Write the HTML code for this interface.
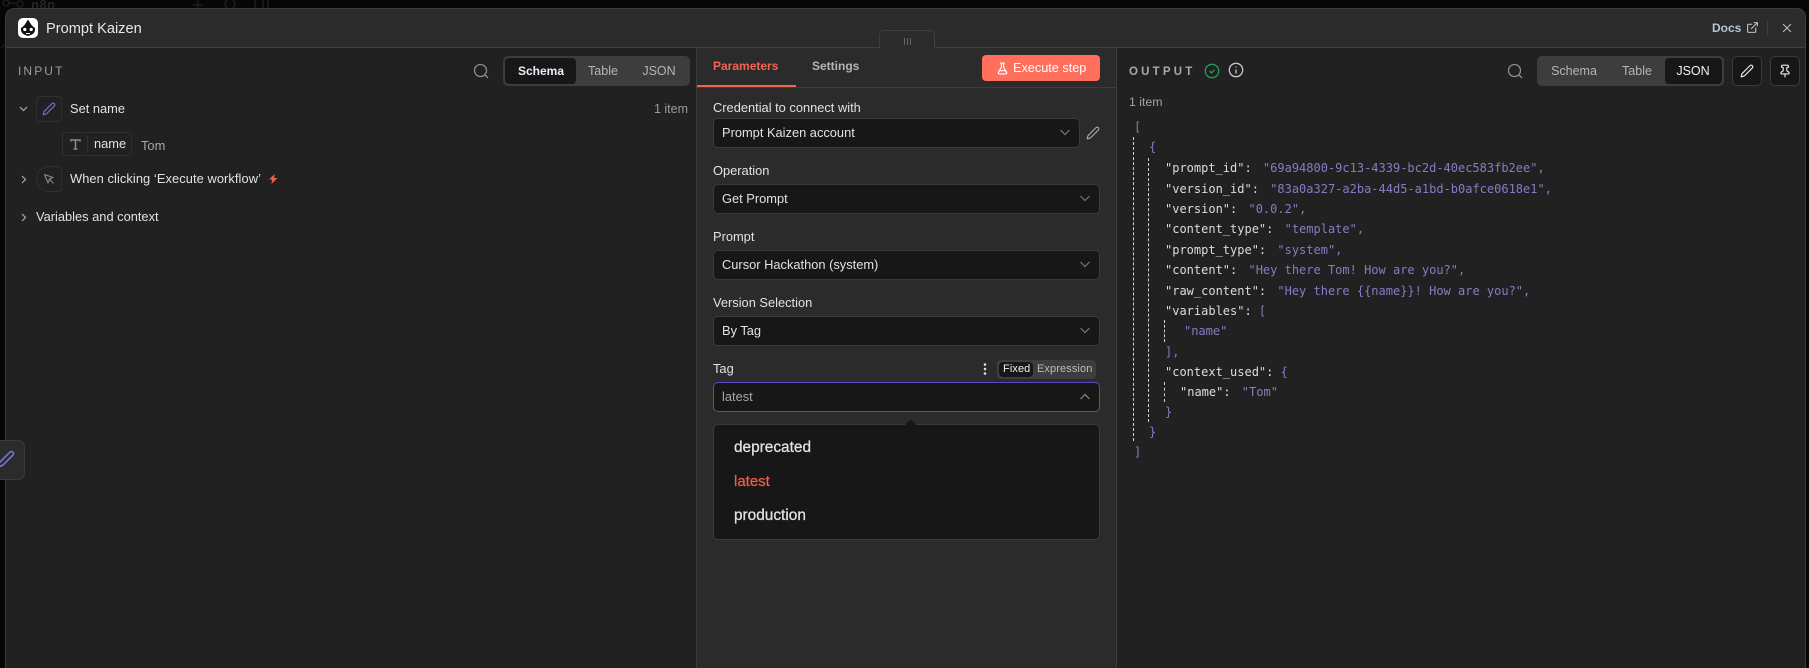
<!DOCTYPE html>
<html><head><meta charset="utf-8"><style>
html,body{margin:0;padding:0;background:#060606;width:1809px;height:668px;overflow:hidden;font-family:"Liberation Sans",sans-serif}
*{box-sizing:border-box}
#root{position:relative;width:1809px;height:668px;overflow:hidden;background:#060606}
.a{position:absolute}
.t{position:absolute;white-space:nowrap;line-height:16px;font-size:12.85px;color:#e2e2e2}
.sel{position:absolute;left:713px;width:387px;height:30px;background:#171717;border:1px solid #3a3a3a;border-radius:5px}
svg{position:absolute;overflow:visible;fill:none}
.j{position:absolute;white-space:pre;font:12px/16px "DejaVu Sans Mono",monospace;color:#dcdcdc}
.j i{font-style:normal;color:#837dc4}
.j b{font-weight:normal;color:#837dc4;margin-left:4px}
.d{position:absolute;width:0;border-left:1px dashed #d0d0de}
.m{-webkit-text-stroke:.25px currentColor}
</style></head><body><div id="root">
<div class="t" style="left:31px;top:-3px;font-size:13px;color:#242424;font-weight:bold;letter-spacing:.5px">n8n</div>
<svg style="left:0;top:0" width="1809" height="60" stroke="#1d1d1d" stroke-width="1.5"><circle cx="6" cy="3" r="3"/><circle cx="20" cy="4" r="3"/><path d="M9 3h8M198 0v9M193 5h10"/><circle cx="230" cy="4" r="5"/><path d="M255 0v8M263 0v8M268 0v8M2 48a3 3 0 1 1 3 3"/></svg>

<div class="a" style="left:5px;top:8px;width:1801px;height:670px;background:#2b2b2b;border:1px solid #3a3a3a;border-radius:9px 9px 0 0;overflow:hidden">
 <div class="a" style="left:0;top:38px;width:1800px;height:1px;background:#3f3f3f"></div>
 <div class="a" style="left:0;top:39px;width:690px;height:640px;background:#212121"></div>
 <div class="a" style="left:690px;top:39px;width:1px;height:640px;background:#3c3c3c"></div>
 <div class="a" style="left:1110px;top:39px;width:1px;height:640px;background:#3c3c3c"></div>
 <div class="a" style="left:1111px;top:39px;width:690px;height:640px;background:#212121"></div>
</div>

<!-- header -->
<div class="a" style="left:18px;top:18px;width:20px;height:20px;background:#fff;border-radius:5px"></div>
<svg style="left:18px;top:18px" width="20" height="20" viewBox="0 0 20 20"><path d="M10 1.500 13.500 7 16 9.500 4 9.500 6.500 7z" fill="#111"/><path d="M3 10c2-2 12-2 14 0 .5 3-1 5-3 6.500l-4 1.500-4-1.500C4 15 2.500 13 3 10z" fill="#111"/><circle cx="6.800" cy="11.500" r="1.600" fill="#fff"/><circle cx="13.200" cy="11.500" r="1.600" fill="#fff"/><path d="M8 15.500h4" stroke="#fff" stroke-width="1"/></svg>
<div class="t" style="left:46px;top:21px;font-size:14.600px;color:#e8e8e8">Prompt Kaizen</div>
<div class="t" style="left:1712px;top:20px;color:#b9c6d4;font-weight:bold;font-size:12px">Docs</div>
<svg style="left:1746px;top:21px" width="13" height="13" viewBox="0 0 24 24" stroke="#b9c6d4" stroke-width="2" stroke-linecap="round" stroke-linejoin="round"><path d="M15 3h6v6M10 14 21 3M18 13v6a2 2 0 0 1-2 2H5a2 2 0 0 1-2-2V8a2 2 0 0 1 2-2h6"/></svg>
<div class="a" style="left:1767px;top:20px;width:1px;height:16px;background:#3f3f3f"></div>
<svg style="left:1783px;top:24px" width="8" height="8" viewBox="0 0 8 8" stroke="#bbb" stroke-width="1.100"><path d="M0 0 8 8M8 0 0 8"/></svg>

<!-- drag handle -->
<div class="a" style="left:879px;top:30px;width:56px;height:18px;background:#2b2b2b;border:1px solid #3f3f3f;border-bottom:none;border-radius:5px 5px 0 0"></div>
<div class="a" style="left:904px;top:38px;width:7px;height:7px;background:repeating-linear-gradient(90deg,#666 0 1px,transparent 1px 3px)"></div>

<!-- INPUT -->
<div class="t" style="left:18px;top:63px;font-size:12px;letter-spacing:2.100px;color:#9c9c9c">INPUT</div>
<svg style="left:473px;top:63px" width="16" height="16" viewBox="0 0 16 16" stroke="#8c8c8c" stroke-width="1.300"><circle cx="7.500" cy="7.500" r="6"/><path d="m12 12 3 3"/></svg>
<div class="a" style="left:503px;top:56px;width:187px;height:30px;background:#3d3d3d;border-radius:5px"></div>
<div class="a" style="left:505px;top:58px;width:71px;height:26px;background:#171717;border-radius:4px"></div>
<div class="t" style="left:518px;top:63px;width:46px;text-align:center;font-weight:bold;font-size:12px;color:#e6edf5">Schema</div>
<div class="t" style="left:588px;top:63px;width:30px;text-align:center;color:#b5b5b5;font-size:12.500px">Table</div>
<div class="t" style="left:640px;top:63px;width:38px;text-align:center;color:#b5b5b5;font-size:12.500px">JSON</div>

<svg style="left:19px;top:106px" width="9" height="6" viewBox="0 0 9 6" stroke="#aaa" stroke-width="1.200"><path d="m1 1 3.500 3.500L8 1"/></svg>
<div class="a" style="left:36px;top:96px;width:26px;height:26px;border:1px solid #303030;border-radius:4px"></div>
<svg style="left:42px;top:102px" width="14" height="14" viewBox="0 0 24 24" stroke="#6f6fd8" stroke-width="2" stroke-linejoin="round"><path d="M21.174 6.812a1 1 0 0 0-3.986-3.987L3.842 16.174a2 2 0 0 0-.5.830l-1.321 4.352a.5.500 0 0 0 .623.622l4.353-1.320a2 2 0 0 0 .830-.497z"/></svg>
<div class="t" style="left:70px;top:101px">Set name</div>
<div class="t" style="left:640px;top:101px;width:48px;text-align:right;color:#9a9a9a;font-size:12.500px">1 item</div>

<div class="a" style="left:62px;top:132px;width:70px;height:24px;border:1px solid #303030;border-radius:4px"></div>
<div class="a" style="left:87px;top:135px;width:1px;height:18px;background:#303030"></div>
<svg style="left:70px;top:139px" width="11" height="11" viewBox="0 0 11 11" stroke="#8d8d8d" stroke-width="1.500"><path d="M1 2.500V1h9v1.500M5.500 1v9M3.500 10h4"/></svg>
<div class="t" style="left:94px;top:136px">name</div>
<div class="t" style="left:141px;top:138px;color:#a8a8a8">Tom</div>

<svg style="left:21px;top:175px" width="6" height="9" viewBox="0 0 6 9" stroke="#aaa" stroke-width="1.200"><path d="m1 1 3.500 3.500L1 8"/></svg>
<div class="a" style="left:36px;top:166px;width:26px;height:26px;border:1px solid #303030;border-radius:13px 4px 4px 13px"></div>
<svg style="left:44px;top:174px" width="10" height="10" viewBox="0 0 10 10" stroke="#888" stroke-width="1.100" stroke-linejoin="round"><path d="M.5.500 9 3.500 5.500 5 4 9zM5.500 5 9.500 9.500"/></svg>
<div class="t" style="left:70px;top:171px;letter-spacing:.08px">When clicking ‘Execute workflow’</div>
<svg style="left:269px;top:174px" width="9" height="10" viewBox="0 0 9 10"><path d="M5.500 0 0 5.500h3L2.500 10 8.500 4h-3.300z" fill="#e8604f"/></svg>

<svg style="left:21px;top:213px" width="6" height="9" viewBox="0 0 6 9" stroke="#aaa" stroke-width="1.200"><path d="m1 1 3.500 3.500L1 8"/></svg>
<div class="t" style="left:36px;top:209px">Variables and context</div>

<!-- left floating pencil -->
<div class="a" style="left:-10px;top:440px;width:35px;height:40px;background:#2b2b2b;border:1px solid #3a3a3a;border-radius:7px"></div>
<svg style="left:-3px;top:450px" width="18" height="18" viewBox="0 0 24 24" stroke="#7b7be8" stroke-width="2" stroke-linejoin="round"><path d="M21.174 6.812a1 1 0 0 0-3.986-3.987L3.842 16.174a2 2 0 0 0-.5.830l-1.321 4.352a.5.500 0 0 0 .623.622l4.353-1.320a2 2 0 0 0 .830-.497z"/></svg>

<!-- Middle -->
<div class="a" style="left:697px;top:87px;width:419px;height:1px;background:#3d3d3d"></div>
<div class="a" style="left:697px;top:85px;width:99px;height:2px;background:#f2644f"></div>
<div class="t" style="left:713px;top:58px;font-weight:bold;font-size:12px;color:#f2644f">Parameters</div>
<div class="t" style="left:812px;top:58px;font-weight:bold;font-size:12px;color:#b5b5b5">Settings</div>
<div class="a" style="left:982px;top:55px;width:118px;height:26px;background:#ff6f5c;border-radius:4px"></div>
<svg style="left:996px;top:62px" width="13" height="13" viewBox="0 0 24 24" stroke="#fff" stroke-width="2.200" stroke-linecap="round" stroke-linejoin="round"><path d="M10 2v7.500L4.500 19a2 2 0 0 0 1.800 3h11.400a2 2 0 0 0 1.800-3L14 9.500V2M8.500 2h7M7.500 16h9"/></svg>
<div class="t" style="left:1013px;top:60px;font-size:12.700px;color:#fff">Execute step</div>

<div class="t" style="left:713px;top:100px">Credential to connect with</div>
<div class="sel" style="width:367px;top:118px"></div>
<div class="t" style="left:722px;top:125px">Prompt Kaizen account</div>
<svg style="left:1060px;top:129px" width="10" height="7" viewBox="0 0 10 7" stroke="#777" stroke-width="1.200"><path d="m.5 1 4.500 4.500L9.500 1"/></svg>
<svg style="left:1086px;top:126px" width="14" height="14" viewBox="0 0 24 24" stroke="#aaa" stroke-width="1.900" stroke-linejoin="round"><path d="M21.174 6.812a1 1 0 0 0-3.986-3.987L3.842 16.174a2 2 0 0 0-.5.830l-1.321 4.352a.5.500 0 0 0 .623.622l4.353-1.320a2 2 0 0 0 .830-.497z"/></svg>

<div class="t" style="left:713px;top:163px">Operation</div>
<div class="sel" style="top:184px"></div>
<div class="t" style="left:722px;top:191px">Get Prompt</div>
<svg style="left:1080px;top:195px" width="10" height="7" viewBox="0 0 10 7" stroke="#777" stroke-width="1.200"><path d="m.5 1 4.500 4.500L9.500 1"/></svg>

<div class="t" style="left:713px;top:229px">Prompt</div>
<div class="sel" style="top:250px"></div>
<div class="t" style="left:722px;top:257px">Cursor Hackathon (system)</div>
<svg style="left:1080px;top:261px" width="10" height="7" viewBox="0 0 10 7" stroke="#777" stroke-width="1.200"><path d="m.5 1 4.500 4.500L9.500 1"/></svg>

<div class="t" style="left:713px;top:295px">Version Selection</div>
<div class="sel" style="top:316px"></div>
<div class="t" style="left:722px;top:323px">By Tag</div>
<svg style="left:1080px;top:327px" width="10" height="7" viewBox="0 0 10 7" stroke="#777" stroke-width="1.200"><path d="m.5 1 4.500 4.500L9.500 1"/></svg>

<div class="t" style="left:713px;top:361px">Tag</div>
<svg style="left:983px;top:362px" width="4" height="14" viewBox="0 0 4 14"><circle cx="2" cy="2.500" r="1.300" fill="#e0e0e0"/><circle cx="2" cy="7" r="1.300" fill="#e0e0e0"/><circle cx="2" cy="11.500" r="1.300" fill="#e0e0e0"/></svg>
<div class="a" style="left:997px;top:360px;width:99px;height:19px;background:#3d3d3d;border-radius:4px"></div>
<div class="a" style="left:999px;top:362px;width:34px;height:15px;background:#171717;border-radius:4px"></div>
<div class="t" style="left:1003px;top:361px;font-size:11px;color:#f0f0f0;width:26px;text-align:center;letter-spacing:.1px;line-height:17px">Fixed</div>
<div class="t" style="left:1037px;top:361px;font-size:11px;color:#bdbdbd;line-height:17px;letter-spacing:.1px">Expression</div>
<div class="sel" style="top:382px;border-color:#5a48c0"></div>
<div class="t" style="left:722px;top:389px;color:#a5a5a5">latest</div>
<svg style="left:1080px;top:393px" width="10" height="7" viewBox="0 0 10 7" stroke="#888" stroke-width="1.200"><path d="m.5 6 4.500-4.500L9.500 6"/></svg>

<div class="a" style="left:713px;top:424px;width:387px;height:116px;background:#171717;border:1px solid #3a3a3a;border-radius:5px"></div>
<svg style="left:904px;top:419px" width="13" height="7" viewBox="0 0 13 7"><path d="M0 7 6.500 0 13 7z" fill="#171717"/></svg>
<div class="t m" style="left:734px;top:440px;font-size:15.400px;color:#e4e4e4">deprecated</div>
<div class="t m" style="left:734px;top:474px;font-size:15px;color:#ec5f4c">latest</div>
<div class="t m" style="left:734px;top:508px;font-size:15.400px;color:#e4e4e4">production</div>

<!-- OUTPUT -->
<div class="t" style="left:1129px;top:63.500px;font-size:11.500px;font-weight:bold;letter-spacing:3.200px;color:#a8a8a8">OUTPUT</div>
<svg style="left:1204px;top:63px" width="16" height="16" viewBox="0 0 16 16" stroke="#1f9d5c" stroke-width="1.300"><circle cx="8" cy="8" r="6.700"/><path d="m5.500 8 2 2 3-3.500"/></svg>
<svg style="left:1228px;top:62px" width="16" height="16" viewBox="0 0 16 16" stroke="#c8c8c8" stroke-width="1.300"><circle cx="8" cy="8" r="6.700"/><path d="M8 7.500v4M8 4.500v1"/></svg>
<div class="t" style="left:1129px;top:94px;font-size:12.300px;color:#a3a3a3">1 item</div>

<svg style="left:1507px;top:63px" width="16" height="16" viewBox="0 0 16 16" stroke="#8c8c8c" stroke-width="1.300"><circle cx="7.500" cy="7.500" r="6"/><path d="m12 12 3 3"/></svg>
<div class="a" style="left:1537px;top:56px;width:187px;height:30px;background:#3d3d3d;border-radius:5px"></div>
<div class="a" style="left:1665px;top:58px;width:57px;height:26px;background:#171717;border-radius:4px"></div>
<div class="t" style="left:1551px;top:63px;width:46px;text-align:center;font-size:12.500px;color:#b5b5b5">Schema</div>
<div class="t" style="left:1622px;top:63px;width:30px;text-align:center;font-size:12.500px;color:#b5b5b5">Table</div>
<div class="t" style="left:1674px;top:63px;width:38px;text-align:center;font-size:12.500px;color:#f0f0f0">JSON</div>
<div class="a" style="left:1732px;top:56px;width:30px;height:30px;background:#171717;border:1px solid #3a3a3a;border-radius:5px"></div>
<svg style="left:1740px;top:64px" width="14" height="14" viewBox="0 0 24 24" stroke="#e8e8e8" stroke-width="2" stroke-linejoin="round"><path d="M21.174 6.812a1 1 0 0 0-3.986-3.987L3.842 16.174a2 2 0 0 0-.5.830l-1.321 4.352a.5.500 0 0 0 .623.622l4.353-1.320a2 2 0 0 0 .830-.497z"/></svg>
<div class="a" style="left:1770px;top:56px;width:30px;height:30px;background:#171717;border:1px solid #3a3a3a;border-radius:5px"></div>
<svg style="left:1778px;top:64px" width="14" height="14" viewBox="0 0 24 24" stroke="#e8e8e8" stroke-width="2" stroke-linecap="round" stroke-linejoin="round"><path d="M12 17v5M9 10.760a2 2 0 0 1-1.110 1.790l-1.780.900A2 2 0 0 0 5 15.240V16a1 1 0 0 0 1 1h12a1 1 0 0 0 1-1v-.760a2 2 0 0 0-1.110-1.790l-1.780-.900A2 2 0 0 1 15 10.760V7a1 1 0 0 1 1-1 2 2 0 0 0 0-4H8a2 2 0 0 0 0 4 1 1 0 0 1 1 1z"/></svg>

<!-- JSON -->
<div class="d" style="left:1133px;top:137px;height:304px"></div>
<div class="d" style="left:1148px;top:158px;height:264px"></div>
<div class="d" style="left:1164px;top:320px;height:22px"></div>
<div class="d" style="left:1164px;top:382px;height:20px"></div>
<div class="j" style="left:1134px;top:119px"><i>[</i></div>
<div class="j" style="left:1149px;top:139px"><i>{</i></div>
<div class="j" style="left:1165px;top:160px">"prompt_id": <b>"69a94800-9c13-4339-bc2d-40ec583fb2ee"</b><i>,</i></div>
<div class="j" style="left:1165px;top:181px">"version_id": <b>"83a0a327-a2ba-44d5-a1bd-b0afce0618e1"</b><i>,</i></div>
<div class="j" style="left:1165px;top:201px">"version": <b>"0.0.2"</b><i>,</i></div>
<div class="j" style="left:1165px;top:221px">"content_type": <b>"template"</b><i>,</i></div>
<div class="j" style="left:1165px;top:242px">"prompt_type": <b>"system"</b><i>,</i></div>
<div class="j" style="left:1165px;top:262px">"content": <b>"Hey there Tom! How are you?"</b><i>,</i></div>
<div class="j" style="left:1165px;top:283px">"raw_content": <b>"Hey there {{name}}! How are you?"</b><i>,</i></div>
<div class="j" style="left:1165px;top:303px">"variables": <i>[</i></div>
<div class="j" style="left:1184px;top:323px"><i>"name"</i></div>
<div class="j" style="left:1165px;top:344px"><i>],</i></div>
<div class="j" style="left:1165px;top:364px">"context_used": <i>{</i></div>
<div class="j" style="left:1180px;top:384px">"name": <b>"Tom"</b></div>
<div class="j" style="left:1165px;top:404px"><i>}</i></div>
<div class="j" style="left:1149px;top:424px"><i>}</i></div>
<div class="j" style="left:1134px;top:444px"><i>]</i></div>
</div></body></html>
